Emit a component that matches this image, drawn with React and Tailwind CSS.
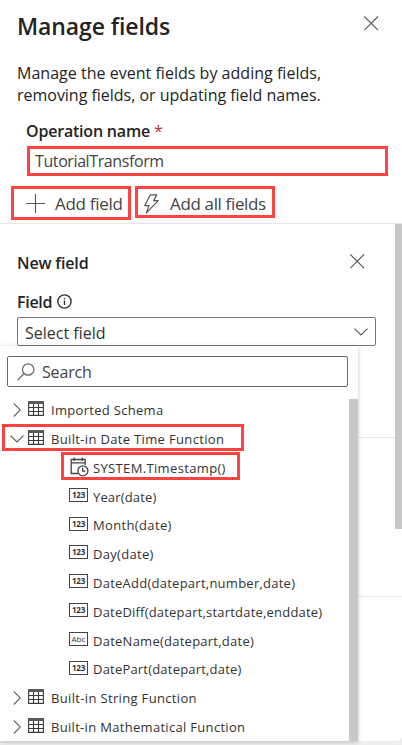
const TableIcon = () => (
  <svg width="16" height="15" viewBox="0 0 16 15" fill="none" stroke="#3a3a3a" strokeWidth="1.1">
    <path d="M0.6 1.5V14.4H15.4V1.5M0.5 6.5H15.5M0.5 10.5H15.5M5.5 3V14.5M10.5 3V14.5" />
    <path d="M0 1.5H16" strokeWidth="3" stroke="#5a5a5a" />
  </svg>
);

const Chevron = ({ open }) =>
  open ? (
    <svg width="14" height="8" viewBox="0 0 14 8" fill="none" stroke="#555" strokeWidth="1.1">
      <path d="M0.5 0.7L7 7L13.5 0.7" />
    </svg>
  ) : (
    <svg width="8" height="14" viewBox="0 0 8 14" fill="none" stroke="#666" strokeWidth="1.1">
      <path d="M0.8 0.5L7.3 7L0.8 13.5" />
    </svg>
  );

const CloseIcon = () => (
  <svg width="15" height="15" viewBox="0 0 15 15" fill="none" stroke="#555" strokeWidth="1.1">
    <path d="M0.3 0.5L14 14.2M14 0.5L0.3 14.2" />
  </svg>
);

const CalendarClock = () => (
  <svg width="19" height="20" viewBox="0 0 19 20" fill="none" stroke="#444" strokeWidth="1.3">
    <path d="M8 16.5H1.2V2.5H15.2V8M1 5.8H15.5M4.2 0.5V4M12.2 0.5V4" />
    <circle cx="12.9" cy="13.8" r="5" />
    <path d="M12.7 10.7V14.2H15.4" />
  </svg>
);

const TypeBadge = ({ abc }) => (
  <span className="flex h-[14px] w-[19px] items-center justify-center border border-[#444] text-[8px] leading-none text-[#333]">
    {abc ? <span className="tracking-[0.1px]">Abc</span> : <span className="font-bold tracking-[-0.3px]">123</span>}
  </span>
);

const Group = ({ label, open, tracking }) => (
  <div className="flex h-[28.8px] shrink-0 items-center">
    <span className="flex w-[28px] items-center justify-center pl-[5px]">
      <Chevron open={open} />
    </span>
    <span className="flex w-[23px] pb-[3px]">
      <TableIcon />
    </span>
    <span className={`pt-px ${tracking}`}>{label}</span>
  </div>
);

const functions = [
  ["Year(date)", "tracking-[0.15px]"],
  ["Month(date)", "tracking-[0.35px]"],
  ["Day(date)", "tracking-[0.3px]"],
  ["DateAdd(datepart,number,date)", "tracking-[0.25px]"],
  ["DateDiff(datepart,startdate,enddate)", "tracking-[0.2px]"],
  ["DateName(datepart,date)", "tracking-[0.25px]"],
  ["DatePart(datepart,date)", "tracking-[0.2px]"],
];

export default function App() {
  return (
    <div className="h-[745px] w-[402px] overflow-hidden bg-[#eeeeee] font-['Open_Sans','Noto_Sans',sans-serif] text-[#242424]">
      <div className="relative flex h-[741px] flex-col rounded-br-[5px] bg-white">
        <header className="flex h-[224px] shrink-0 flex-col border-b border-[#e6e6e6]">
          <div className="flex h-[62px] justify-between pr-[23.5px] pl-[17px]">
            <h1 className="pt-[10px] text-[23px] leading-[32px] font-semibold tracking-[-0.1px] whitespace-nowrap">Manage fields</h1>
            <button className="mt-[16px] h-[15px]"><CloseIcon /></button>
          </div>
          <p className="h-[58px] pl-[17px] text-[16px] leading-[22px] whitespace-nowrap">
            <span className="tracking-[0.02px]">Manage the event fields by adding fields,</span>
            <br />
            <span className="tracking-[-0.02px]">removing fields, or updating field names.</span>
          </p>
          <label className="h-[26px] pl-[26px] text-[16px] leading-[22px] font-semibold tracking-[-0.2px] whitespace-nowrap">
            Operation name <span className="font-normal text-[#b83232]">*</span>
          </label>
          <div className="ml-[27px] flex h-[30px] w-[361px] items-center border-[3px] border-[#ff4242] pl-[5px] text-[16px] tracking-[-0.4px] text-[#444]">
            TutorialTransform
          </div>
          <div className="flex items-start gap-[4px] pt-[10px] pl-[11px] text-[17px] whitespace-nowrap text-[#444]">
            <button className="flex h-[34px] w-[120px] items-center border-[3px] border-[#ff4242] pl-[12px]">
              <svg width="19" height="19" viewBox="0 0 19 19" stroke="#555" strokeWidth="1.1">
                <path d="M0 9.5H19M9.5 0V19" />
              </svg>
              <span className="ml-[10px] pt-[2px] tracking-[-0.3px]">Add field</span>
            </button>
            <button className="flex h-[32px] w-[140px] items-center border-[3px] border-[#ff4242] pl-[6px]">
              <svg className="mt-[3px]" width="15" height="20" viewBox="0 0 15 20" fill="none" stroke="#555" strokeWidth="1.2" strokeLinejoin="round">
                <path d="M6.3 0.8H12.8L9.6 6.6H14.2L2.4 18.8L5 11.6H0.8Z" />
              </svg>
              <span className="ml-[11px] pt-[4px] tracking-[-0.35px]">Add all fields</span>
            </button>
          </div>
        </header>

        <main className="flex min-h-0 flex-1">
          <section className="flex w-[395px] flex-col">
            <div className="flex h-[67px] items-start justify-between pt-[28px] pr-[30.5px] pl-[17px]">
              <h2 className="text-[16px] leading-[22px] font-semibold tracking-[-0.15px]">New field</h2>
              <button className="mt-[2px]"><CloseIcon /></button>
            </div>
            <div className="flex h-[26px] gap-[5px] pl-[17px]">
              <span className="text-[16px] leading-[22px] font-semibold tracking-[-0.3px]">Field</span>
              <svg className="mt-[3px]" width="15" height="15" viewBox="0 0 15 15" fill="none" stroke="#333" strokeWidth="1.4">
                <circle cx="7.5" cy="7.5" r="6.6" />
                <path d="M7.5 6.5V11M7.5 4V5.3" />
              </svg>
            </div>
            <div className="ml-[17px] flex h-[29px] w-[359px] shrink-0 items-center justify-between rounded-[2px] border border-[#777] pr-[7px] pl-[7px] text-[16px] text-[#333]">
              <span className="pt-[2px]">Select field</span>
              <Chevron open />
            </div>
            <div className="h-[92px] shrink-0 border-b border-[#e6e6e6]" />
            <div className="h-[159px] shrink-0 border-b border-[#e6e6e6]" />
          </section>
          <div className="flex w-[7px] flex-col">
            <div className="h-[305px] bg-[#c8c8c8]" />
            <div className="h-[68px] border-b border-[#e6e6e6]" />
          </div>
        </main>

        <div className="absolute top-[346px] left-0 flex h-[395px] w-[358px] flex-col bg-white shadow-[0_1px_5px_rgba(0,0,0,0.22)]">
          <div className="mt-[10px] ml-[7px] flex h-[31px] w-[341px] shrink-0 items-center rounded-[2px] border border-[#666] pl-[9px]">
            <svg width="18" height="18" viewBox="0 0 18 18" fill="none" stroke="#666" strokeWidth="1.2">
              <circle cx="11.2" cy="6.5" r="5.7" />
              <path d="M7.1 10.5L0.5 17.3" />
            </svg>
            <span className="ml-[7px] text-[16px] tracking-[-0.15px] text-[#444]">Search</span>
          </div>
          <div className="mt-[9px] flex min-h-0 flex-1 justify-between">
            <div className="relative flex flex-col text-[13px] whitespace-nowrap text-[#333]">
              <Group label="Imported Schema" tracking="tracking-[0.3px]" />
              <Group label="Built-in Date Time Function" open tracking="tracking-[0.34px]" />
              <div className="flex h-[28.8px] shrink-0 items-center pl-[70px]">
                <span className="pb-[2px]"><CalendarClock /></span>
                <span className="ml-[4px] pt-px tracking-[0.35px]">SYSTEM.Timestamp()</span>
              </div>
              {functions.map(([name, tracking]) => (
                <div key={name} className="flex h-[28.8px] shrink-0 items-center pl-[69px]">
                  <span className="pb-[4px]"><TypeBadge abc={name.startsWith("DateName")} /></span>
                  <span className={`ml-[5px] pt-px ${tracking}`}>{name}</span>
                </div>
              ))}
              <Group label="Built-in String Function" tracking="tracking-[0.34px]" />
              <Group label="Built-in Mathematical Function" tracking="tracking-[0.31px]" />
              <div className="absolute top-[28px] left-[2px] h-[27px] w-[242px] border-[3px] border-[#ff4242]" />
              <div className="absolute top-[56px] left-[61px] h-[28px] w-[179px] border-[3px] border-[#ff4242]" />
            </div>
            <div className="mt-[3px] w-[9px] bg-[#c8c8c8]" />
          </div>
        </div>
      </div>
    </div>
  );
}
